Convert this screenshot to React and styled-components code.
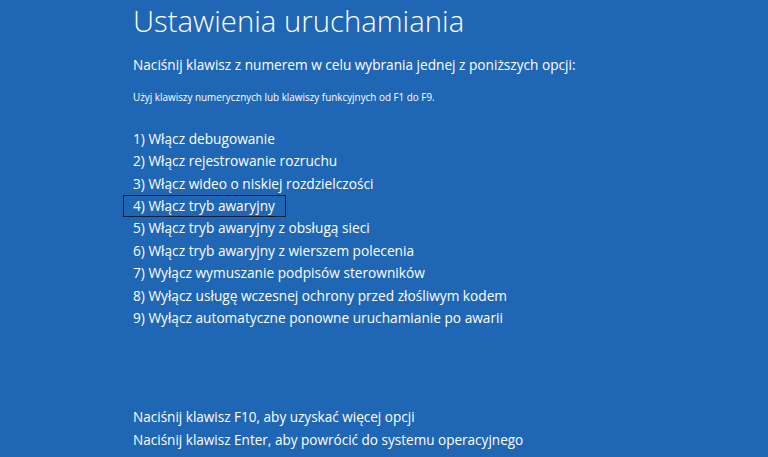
import React from "react";
import styled, { createGlobalStyle } from "styled-components";

const GlobalStyle = createGlobalStyle`
  html, body {
    margin: 0;
    padding: 0;
    background: #1f66b5;
  }
  body {
    font-family: "Open Sans", "Noto Sans", "DejaVu Sans", sans-serif;
    color: #ffffff;
  }
`;

const Screen = styled.div`
  width: 768px;
  height: 457px;
  background: #1f66b5;
  box-sizing: border-box;
  padding: 0 0 0 133px;
  display: flex;
  flex-direction: column;
  overflow: hidden;
`;

const Title = styled.h1`
  margin: 0;
  padding-top: 1px;
  font-size: 29.3px;
  font-weight: 300;
  line-height: 40px;
`;

const Lead = styled.p`
  margin: 13px 0 0;
  font-size: 13.65px;
  line-height: 22px;
`;

const Hint = styled.p`
  margin: 13px 0 0;
  font-size: 9.9px;
  line-height: 16px;
`;

const Options = styled.ol`
  list-style: none;
  margin: 22.8px 0 0;
  padding: 0;
  display: flex;
  flex-direction: column;
`;

const Option = styled.li`
  font-size: 13.7px;
  line-height: 20.4px;
  height: 22.4px;
  margin-left: -10px;
  padding-left: 9px;
  padding-right: 10px;
  width: fit-content;
  border: 1px solid ${(p) => (p.selected ? "#0c1d38" : "transparent")};
  box-sizing: border-box;
`;

const Footer = styled.div`
  margin-top: auto;
  padding-bottom: 6px;
  display: flex;
  flex-direction: column;
`;

const FooterLine = styled.div`
  font-size: 13.55px;
  line-height: 22.4px;
`;

const options = [
  "Włącz debugowanie",
  "Włącz rejestrowanie rozruchu",
  "Włącz wideo o niskiej rozdzielczości",
  "Włącz tryb awaryjny",
  "Włącz tryb awaryjny z obsługą sieci",
  "Włącz tryb awaryjny z wierszem polecenia",
  "Wyłącz wymuszanie podpisów sterowników",
  "Wyłącz usługę wczesnej ochrony przed złośliwym kodem",
  "Wyłącz automatyczne ponowne uruchamianie po awarii",
];

export default function App() {
  return (
    <>
      <GlobalStyle />
      <Screen>
        <Title>Ustawienia uruchamiania</Title>
        <Lead>Naciśnij klawisz z numerem w celu wybrania jednej z poniższych opcji:</Lead>
        <Hint>Użyj klawiszy numerycznych lub klawiszy funkcyjnych od F1 do F9.</Hint>
        <Options>
          {options.map((text, i) => (
            <Option key={i} selected={i === 3}>
              {i + 1}) {text}
            </Option>
          ))}
        </Options>
        <Footer>
          <FooterLine>Naciśnij klawisz F10, aby uzyskać więcej opcji</FooterLine>
          <FooterLine>Naciśnij klawisz Enter, aby powrócić do systemu operacyjnego</FooterLine>
        </Footer>
      </Screen>
    </>
  );
}
